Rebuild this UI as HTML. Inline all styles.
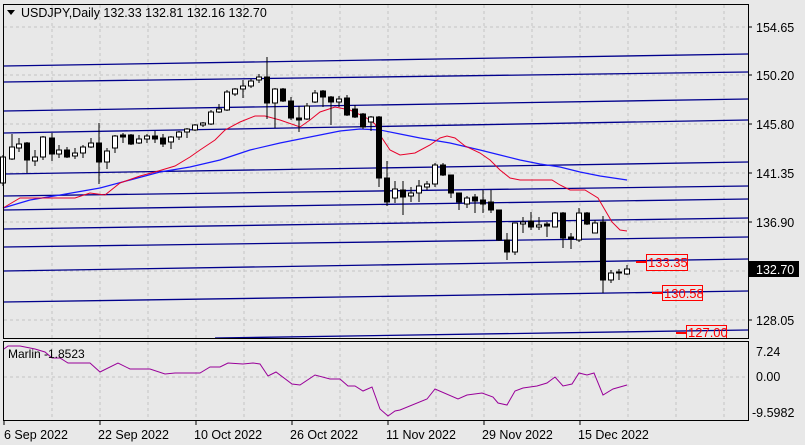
<!DOCTYPE html>
<html><head><meta charset="utf-8"><style>
html,body{margin:0;padding:0;background:#e8e8e8;width:805px;height:445px;overflow:hidden}
svg{display:block;font-family:"Liberation Sans",sans-serif}
</style></head><body>
<svg width="805" height="445" viewBox="0 0 805 445" xmlns="http://www.w3.org/2000/svg">
<rect width="805" height="445" fill="#e8e8e8"/>
<!-- grid -->
<g stroke="#c4c4c4" stroke-dasharray="3,3" stroke-width="1">
<line x1="52" y1="5" x2="52" y2="338"/><line x1="100" y1="5" x2="100" y2="338"/><line x1="148" y1="5" x2="148" y2="338"/><line x1="196" y1="5" x2="196" y2="338"/><line x1="244" y1="5" x2="244" y2="338"/><line x1="292" y1="5" x2="292" y2="338"/><line x1="340" y1="5" x2="340" y2="338"/><line x1="388" y1="5" x2="388" y2="338"/><line x1="436" y1="5" x2="436" y2="338"/><line x1="484" y1="5" x2="484" y2="338"/><line x1="532" y1="5" x2="532" y2="338"/><line x1="580" y1="5" x2="580" y2="338"/><line x1="628" y1="5" x2="628" y2="338"/><line x1="676" y1="5" x2="676" y2="338"/><line x1="724" y1="5" x2="724" y2="338"/>
<line x1="52" y1="342" x2="52" y2="420"/><line x1="100" y1="342" x2="100" y2="420"/><line x1="148" y1="342" x2="148" y2="420"/><line x1="196" y1="342" x2="196" y2="420"/><line x1="244" y1="342" x2="244" y2="420"/><line x1="292" y1="342" x2="292" y2="420"/><line x1="340" y1="342" x2="340" y2="420"/><line x1="388" y1="342" x2="388" y2="420"/><line x1="436" y1="342" x2="436" y2="420"/><line x1="484" y1="342" x2="484" y2="420"/><line x1="532" y1="342" x2="532" y2="420"/><line x1="580" y1="342" x2="580" y2="420"/><line x1="628" y1="342" x2="628" y2="420"/><line x1="676" y1="342" x2="676" y2="420"/><line x1="724" y1="342" x2="724" y2="420"/>
<line x1="4" y1="27" x2="748" y2="27"/><line x1="4" y1="75" x2="748" y2="75"/><line x1="4" y1="124" x2="748" y2="124"/><line x1="4" y1="173" x2="748" y2="173"/><line x1="4" y1="222" x2="748" y2="222"/><line x1="4" y1="271" x2="748" y2="271"/><line x1="4" y1="320" x2="748" y2="320"/>
<line x1="4" y1="377" x2="748" y2="377"/>
</g>
<!-- horizontal blue levels -->
<g stroke="#00008c" stroke-width="1.3" fill="none">
<line x1="4" y1="66" x2="748" y2="54"/><line x1="4" y1="82" x2="748" y2="72"/><line x1="4" y1="111" x2="748" y2="99"/><line x1="4" y1="133" x2="748" y2="120"/><line x1="4" y1="174" x2="748" y2="162"/><line x1="4" y1="196" x2="748" y2="186"/><line x1="4" y1="210" x2="748" y2="199"/><line x1="4" y1="229" x2="748" y2="218"/><line x1="4" y1="247" x2="748" y2="237"/><line x1="4" y1="271" x2="748" y2="259"/><line x1="4" y1="302" x2="748" y2="291"/><line x1="215" y1="338" x2="748" y2="330"/>
</g>
<!-- MAs -->
<polyline fill="none" stroke="#1a1aff" stroke-width="1.2" points="3,208 30,200 60,195 100,188 130,180 160,172 190,167 220,160 250,150 280,143 310,137 340,131 360,129 380,130 400,134 420,138 450,143 480,150 500,155 520,160 540,164 560,167 580,172 600,176 627,180"/>
<polyline fill="none" stroke="#e8002a" stroke-width="1" points="3,208 20,198 50,198 75,198 90,193 105,195 120,183 140,176 155,172 175,166 190,157 200,150 215,140 225,130 240,122 255,116 265,116 280,120 300,127 310,120 320,112 335,107 350,110 365,117 375,124 380,135 390,150 400,155 415,153 430,145 440,138 447,136 455,138 465,146 480,153 490,160 500,170 510,178 520,180 552,180 560,185 570,190 585,190 598,198 605,210 612,222 620,230 627,231"/>
<!-- candles -->
<g stroke="#000" stroke-width="1">
<line x1="3" y1="155" x2="3" y2="186"/><rect x="0.5" y="157" width="5" height="26" fill="#fff"/>
<line x1="12" y1="134" x2="12" y2="160"/><rect x="9.5" y="147" width="5" height="12" fill="#fff"/>
<line x1="19" y1="138" x2="19" y2="152"/><rect x="16.5" y="144" width="5" height="4" fill="#fff"/>
<line x1="27" y1="142" x2="27" y2="173"/><rect x="24.5" y="143" width="5" height="17" fill="#000"/>
<line x1="35" y1="150" x2="35" y2="166"/><rect x="32.5" y="157" width="5" height="4" fill="#fff"/>
<line x1="43" y1="136" x2="43" y2="160"/><rect x="40.5" y="137" width="5" height="20" fill="#fff"/>
<line x1="52" y1="133" x2="52" y2="161"/><rect x="49.5" y="138" width="5" height="16" fill="#000"/>
<line x1="59" y1="145" x2="59" y2="158"/><rect x="56.5" y="150" width="5" height="4" fill="#fff"/>
<line x1="67" y1="147" x2="67" y2="158"/><rect x="64.5" y="150" width="5" height="7" fill="#000"/>
<line x1="75" y1="148" x2="75" y2="159"/><rect x="72.5" y="153" width="5" height="3" fill="#fff"/>
<line x1="83" y1="145" x2="83" y2="158"/><rect x="80.5" y="147" width="5" height="6" fill="#fff"/>
<line x1="91" y1="138" x2="91" y2="148"/><rect x="88.5" y="143" width="5" height="4" fill="#fff"/>
<line x1="99" y1="123" x2="99" y2="184"/><rect x="96.5" y="143" width="5" height="19" fill="#000"/>
<line x1="107" y1="148" x2="107" y2="169"/><rect x="104.5" y="151" width="5" height="11" fill="#fff"/>
<line x1="115" y1="135" x2="115" y2="153"/><rect x="112.5" y="136" width="5" height="12" fill="#fff"/>
<line x1="123" y1="133" x2="123" y2="143"/><rect x="120.5" y="135" width="5" height="2" fill="#000"/>
<line x1="131" y1="134" x2="131" y2="145"/><rect x="128.5" y="135" width="5" height="9" fill="#000"/>
<line x1="139" y1="135" x2="139" y2="144"/><rect x="136.5" y="139" width="5" height="4" fill="#fff"/>
<line x1="147" y1="134" x2="147" y2="143"/><rect x="144.5" y="136" width="5" height="3" fill="#fff"/>
<line x1="155" y1="131" x2="155" y2="143"/><rect x="152.5" y="136" width="5" height="3" fill="#000"/>
<line x1="163" y1="134" x2="163" y2="147"/><rect x="160.5" y="138" width="5" height="6" fill="#000"/>
<line x1="171" y1="136" x2="171" y2="149"/><rect x="168.5" y="137" width="5" height="5" fill="#fff"/>
<line x1="179" y1="131" x2="179" y2="140"/><rect x="176.5" y="132" width="5" height="5" fill="#fff"/>
<line x1="187" y1="128" x2="187" y2="138"/><rect x="184.5" y="129" width="5" height="3" fill="#fff"/>
<line x1="195" y1="124" x2="195" y2="131"/><rect x="192.5" y="125" width="5" height="5" fill="#fff"/>
<line x1="203" y1="122" x2="203" y2="127"/><rect x="200.5" y="123" width="5" height="2" fill="#fff"/>
<line x1="211" y1="110" x2="211" y2="125"/><rect x="208.5" y="112" width="5" height="12" fill="#fff"/>
<line x1="219" y1="104" x2="219" y2="113"/><rect x="216.5" y="109" width="5" height="3" fill="#fff"/>
<line x1="227" y1="90" x2="227" y2="111"/><rect x="224.5" y="92" width="5" height="18" fill="#fff"/>
<line x1="235" y1="88" x2="235" y2="96"/><rect x="232.5" y="89" width="5" height="5" fill="#fff"/>
<line x1="243" y1="80" x2="243" y2="98"/><rect x="240.5" y="86" width="5" height="3" fill="#fff"/>
<line x1="251" y1="79" x2="251" y2="88"/><rect x="248.5" y="81" width="5" height="5" fill="#fff"/>
<line x1="259" y1="74" x2="259" y2="83"/><rect x="256.5" y="77" width="5" height="3" fill="#fff"/>
<line x1="267" y1="57" x2="267" y2="119"/><rect x="264.5" y="77" width="5" height="26" fill="#000"/>
<line x1="275" y1="88" x2="275" y2="128"/><rect x="272.5" y="89" width="5" height="14" fill="#fff"/>
<line x1="283" y1="88" x2="283" y2="102"/><rect x="280.5" y="89" width="5" height="12" fill="#000"/>
<line x1="291" y1="97" x2="291" y2="120"/><rect x="288.5" y="101" width="5" height="17" fill="#000"/>
<line x1="299" y1="106" x2="299" y2="132"/><rect x="296.5" y="118" width="5" height="2" fill="#000"/>
<line x1="307" y1="103" x2="307" y2="120"/><rect x="304.5" y="106" width="5" height="13" fill="#fff"/>
<line x1="315" y1="90" x2="315" y2="103"/><rect x="312.5" y="93" width="5" height="9" fill="#fff"/>
<line x1="323" y1="90" x2="323" y2="107"/><rect x="320.5" y="91" width="5" height="6" fill="#000"/>
<line x1="331" y1="96" x2="331" y2="125"/><rect x="328.5" y="97" width="5" height="5" fill="#000"/>
<line x1="339" y1="96" x2="339" y2="107"/><rect x="336.5" y="99" width="5" height="3" fill="#fff"/>
<line x1="347" y1="95" x2="347" y2="116"/><rect x="344.5" y="98" width="5" height="17" fill="#000"/>
<line x1="355" y1="105" x2="355" y2="118"/><rect x="352.5" y="109" width="5" height="8" fill="#000"/>
<line x1="363" y1="113" x2="363" y2="129"/><rect x="360.5" y="114" width="5" height="13" fill="#000"/>
<line x1="371" y1="116" x2="371" y2="131"/><rect x="368.5" y="117" width="5" height="5" fill="#fff"/>
<line x1="379" y1="116" x2="379" y2="187"/><rect x="376.5" y="117" width="5" height="61" fill="#000"/>
<line x1="387" y1="161" x2="387" y2="206"/><rect x="384.5" y="178" width="5" height="24" fill="#000"/>
<line x1="395" y1="181" x2="395" y2="203"/><rect x="392.5" y="189" width="5" height="9" fill="#fff"/>
<line x1="403" y1="181" x2="403" y2="215"/><rect x="400.5" y="190" width="5" height="7" fill="#000"/>
<line x1="411" y1="187" x2="411" y2="202"/><rect x="408.5" y="193" width="5" height="3" fill="#fff"/>
<line x1="419" y1="180" x2="419" y2="202"/><rect x="416.5" y="186" width="5" height="7" fill="#fff"/>
<line x1="427" y1="181" x2="427" y2="190"/><rect x="424.5" y="184" width="5" height="3" fill="#fff"/>
<line x1="435" y1="163" x2="435" y2="187"/><rect x="432.5" y="165" width="5" height="19" fill="#fff"/>
<line x1="443" y1="163" x2="443" y2="176"/><rect x="440.5" y="165" width="5" height="10" fill="#000"/>
<line x1="451" y1="175" x2="451" y2="198"/><rect x="448.5" y="175" width="5" height="18" fill="#000"/>
<line x1="459" y1="193" x2="459" y2="210"/><rect x="456.5" y="193" width="5" height="9" fill="#000"/>
<line x1="467" y1="196" x2="467" y2="208"/><rect x="464.5" y="198" width="5" height="6" fill="#fff"/>
<line x1="475" y1="194" x2="475" y2="213"/><rect x="472.5" y="197" width="5" height="4" fill="#000"/>
<line x1="483" y1="190" x2="483" y2="213"/><rect x="480.5" y="200" width="5" height="4" fill="#000"/>
<line x1="491" y1="190" x2="491" y2="213"/><rect x="488.5" y="202" width="5" height="8" fill="#000"/>
<line x1="499" y1="210" x2="499" y2="241"/><rect x="496.5" y="210" width="5" height="30" fill="#000"/>
<line x1="507" y1="233" x2="507" y2="260"/><rect x="504.5" y="240" width="5" height="12" fill="#000"/>
<line x1="515" y1="223" x2="515" y2="255"/><rect x="512.5" y="223" width="5" height="29" fill="#fff"/>
<line x1="523" y1="217" x2="523" y2="233"/><rect x="520.5" y="222" width="5" height="2" fill="#fff"/>
<line x1="531" y1="212" x2="531" y2="230"/><rect x="528.5" y="221" width="5" height="6" fill="#000"/>
<line x1="539" y1="217" x2="539" y2="230"/><rect x="536.5" y="225" width="5" height="2" fill="#fff"/>
<line x1="547" y1="222" x2="547" y2="237"/><rect x="544.5" y="224" width="5" height="2" fill="#000"/>
<line x1="555" y1="212" x2="555" y2="227"/><rect x="552.5" y="213" width="5" height="14" fill="#fff"/>
<line x1="563" y1="212" x2="563" y2="248"/><rect x="560.5" y="213" width="5" height="25" fill="#000"/>
<line x1="571" y1="233" x2="571" y2="249"/><rect x="568.5" y="237" width="5" height="2" fill="#000"/>
<line x1="579" y1="208" x2="579" y2="242"/><rect x="576.5" y="213" width="5" height="27" fill="#fff"/>
<line x1="587" y1="212" x2="587" y2="225"/><rect x="584.5" y="213" width="5" height="11" fill="#000"/>
<line x1="595" y1="220" x2="595" y2="233"/><rect x="592.5" y="223" width="5" height="10" fill="#fff"/>
<line x1="603" y1="216" x2="603" y2="293"/><rect x="600.5" y="222" width="5" height="58" fill="#000"/>
<line x1="611" y1="270" x2="611" y2="283"/><rect x="608.5" y="273" width="5" height="7" fill="#fff"/>
<line x1="619" y1="269" x2="619" y2="280"/><rect x="616.5" y="272" width="5" height="1" fill="#fff"/>
<line x1="627" y1="265" x2="627" y2="275"/><rect x="624.5" y="269" width="5" height="5" fill="#fff"/>
</g>
<!-- red level labels -->
<g stroke="#ff0000" fill="none">
<line x1="636" y1="262" x2="646" y2="262" stroke-width="2"/><rect x="646.5" y="254.5" width="41" height="16"/>
<line x1="652" y1="293" x2="662" y2="293" stroke-width="2"/><rect x="662.5" y="285.5" width="40" height="15"/>
<line x1="676" y1="333" x2="686" y2="333" stroke-width="2"/><rect x="686.5" y="325.5" width="40" height="14"/>
</g>
<g fill="#ff0000" font-size="13">
<text x="648" y="267">133.35</text><text x="664" y="298">130.58</text><text x="688" y="337">127.00</text>
</g>
<!-- frames -->
<rect x="0" y="338" width="805" height="4" fill="#e8e8e8"/>
<g stroke="#000" fill="none" stroke-width="1">
<rect x="3.5" y="4.5" width="745" height="334"/>
<rect x="3.5" y="341.5" width="745" height="79"/>
</g>
<!-- price axis -->
<g font-size="12.5" fill="#000">
<text x="756" y="32">154.65</text><text x="756" y="80">150.20</text><text x="756" y="129">145.80</text><text x="756" y="178">141.35</text><text x="756" y="227">136.90</text><text x="756" y="325">128.05</text>
<text x="756" y="356">7.24</text><text x="756" y="381">0.00</text><text x="752" y="417">-9.5982</text>
</g>
<g stroke="#000"><line x1="748" y1="27" x2="752" y2="27"/><line x1="748" y1="75" x2="752" y2="75"/><line x1="748" y1="124" x2="752" y2="124"/><line x1="748" y1="173" x2="752" y2="173"/><line x1="748" y1="222" x2="752" y2="222"/><line x1="748" y1="320" x2="752" y2="320"/></g>
<rect x="749" y="261" width="50" height="16" fill="#000"/>
<text x="756" y="274" font-size="12.5" fill="#fff">132.70</text>
<!-- indicator -->
<polyline fill="none" stroke="#990099" stroke-width="1" points="4,349 8,346 20,346 35,349 45,352 52,358 60,358 68,363 90,363 100,372 118,363 130,369 150,369 165,374 175,373 200,373 210,367 220,367 228,363 243,364 253,363 260,364 268,376 276,372 292,384 300,385 315,375 330,379 340,379 348,386 355,386 363,391 372,387 380,409 388,416 395,411 400,410 427,399 435,389 458,399 467,395 482,393 493,397 498,403 507,405 515,391 523,388 537,386 547,383 555,377 563,386 572,384 579,373 587,375 594,373 603,395 613,389 627,385"/>
<text x="8" y="358" font-size="12" fill="#000">Marlin -1.8523</text>
<!-- time axis -->
<g stroke="#000"><line x1="4" y1="421" x2="4" y2="425"/><line x1="100" y1="421" x2="100" y2="425"/><line x1="196" y1="421" x2="196" y2="425"/><line x1="292" y1="421" x2="292" y2="425"/><line x1="388" y1="421" x2="388" y2="425"/><line x1="484" y1="421" x2="484" y2="425"/><line x1="580" y1="421" x2="580" y2="425"/></g>
<g font-size="12.5" fill="#000">
<text x="4" y="439">6 Sep 2022</text><text x="98" y="439">22 Sep 2022</text><text x="194" y="439">10 Oct 2022</text><text x="290" y="439">26 Oct 2022</text><text x="386" y="439">11 Nov 2022</text><text x="482" y="439">29 Nov 2022</text><text x="578" y="439">15 Dec 2022</text>
</g>
<!-- title -->
<polygon points="7,10 15,10 11,15" fill="#000"/>
<text x="21" y="17" font-size="12.5" fill="#000">USDJPY,Daily  132.33 132.81 132.16 132.70</text>
</svg>
</body></html>
